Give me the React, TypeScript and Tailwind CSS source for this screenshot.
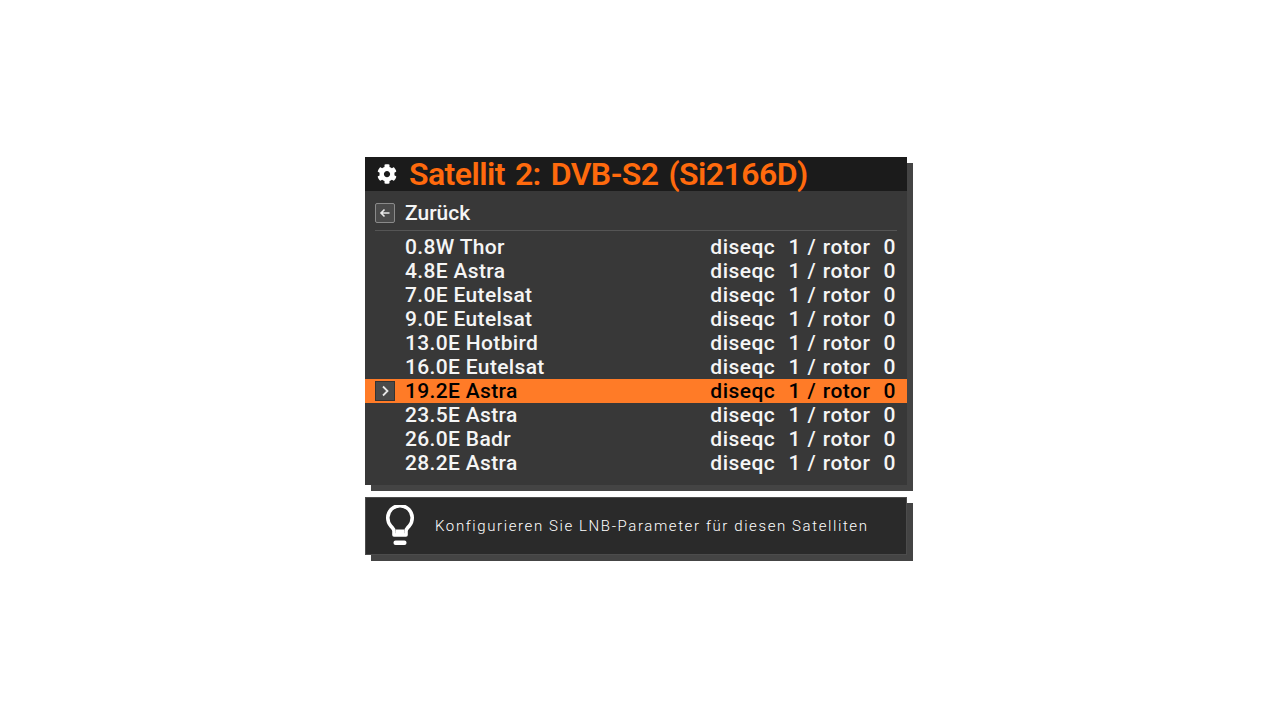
import { FaCog } from "react-icons/fa";

const rows = [
  "0.8W Thor",
  "4.8E Astra",
  "7.0E Eutelsat",
  "9.0E Eutelsat",
  "13.0E Hotbird",
  "16.0E Eutelsat",
  "19.2E Astra",
  "23.5E Astra",
  "26.0E Badr",
  "28.2E Astra",
];

export default function App() {
  return (
    <div className="min-h-[720px] bg-white pt-[157px] pl-[365px] font-['Roboto',sans-serif]">
      <div className="w-[542px] bg-[#383838] shadow-[6px_6px_0_#444444]">
        <div className="flex h-[34px] items-center bg-[#1b1b1b] pl-[12px]">
          <FaCog size={20} color="#fff" className="mr-[12px] shrink-0" />
          <span className="text-[32px] leading-[34px] font-semibold tracking-[-0.55px] [word-spacing:2.500px] text-[#ff6a0d]">Satellit 2: DVB-S2 (Si2166D)</span>
        </div>
        <div className="pt-[10px] pb-[10px]">
          <div className="mx-[10px] flex h-[30px] items-start border-b border-[#555555]">
            <div className="flex h-[24px] items-center">
              <span className="flex h-[20px] w-[20px] items-center justify-center rounded-[2px] border border-[#8a8a8a] bg-[#4a4a4a]">
                <svg width="12" height="12" viewBox="0 0 12 12" fill="none" stroke="#e8e8e8" strokeWidth="1.6">
                  <path d="M10.5 6H2M5.5 2.5 2 6l3.5 3.5" />
                </svg>
              </span>
              <span className="ml-[10px] text-[21px] leading-[24px] font-medium text-[#f5f5f5]">Zurück</span>
            </div>
          </div>
          <div className="mt-[4px]">
            {rows.map((name, i) => {
              const selected = i === 6;
              return (
                <div
                  key={name}
                  className={
                    selected
                      ? "flex h-[24px] items-center justify-between bg-[#ff7b27] pr-[11px] pl-[10px] text-[21px] leading-[24px] font-medium tracking-[0.35px] text-black"
                      : "flex h-[24px] items-center justify-between pr-[11px] pl-[10px] text-[21px] leading-[24px] font-medium tracking-[0.35px] text-[#f5f5f5]"
                  }
                >
                  <div className="flex items-center">
                    <span className="flex h-[20px] w-[20px] items-center justify-center">
                      {selected && (
                        <span className="flex h-[20px] w-[20px] items-center justify-center border border-[#333333] bg-[#4a4a4a]">
                          <svg width="12" height="12" viewBox="0 0 12 12" fill="none" stroke="#e8e8e8" strokeWidth="1.8">
                            <path d="M4 1.500 8.500 6 4 10.500" />
                          </svg>
                        </span>
                      )}
                    </span>
                    <span className="ml-[10px]">{name}</span>
                  </div>
                  <span className="whitespace-pre tracking-[0.45px] [word-spacing:1px]">{"diseqc  1 / rotor  0"}</span>
                </div>
              );
            })}
          </div>
        </div>
      </div>
      <div className="mt-[12px] flex h-[58px] w-[542px] items-center border border-[#4c4c4c] bg-[#2a2a2a] pl-[19px] shadow-[6px_6px_0_#444444]">
        <svg width="30" height="42" viewBox="0 0 30 42" fill="none" className="shrink-0">
          <path d="M9 30v-4c0-2-1.500-3-3.300-5.200A12.200 12.200 0 1 1 24.300 20.800C22.500 23 21 24 21 26v4z" stroke="#fff" strokeWidth="3.600" strokeLinejoin="round" />
          <path d="M11 27h8" stroke="#fff" strokeWidth="5" />
          <rect x="8.500" y="35.500" width="13" height="4.500" rx="2" fill="#fff" />
        </svg>
        <span className="ml-[20px] text-[15px] tracking-[1.600px] font-light text-[#ffffff]">Konfigurieren Sie LNB-Parameter für diesen Satelliten</span>
      </div>
    </div>
  );
}
